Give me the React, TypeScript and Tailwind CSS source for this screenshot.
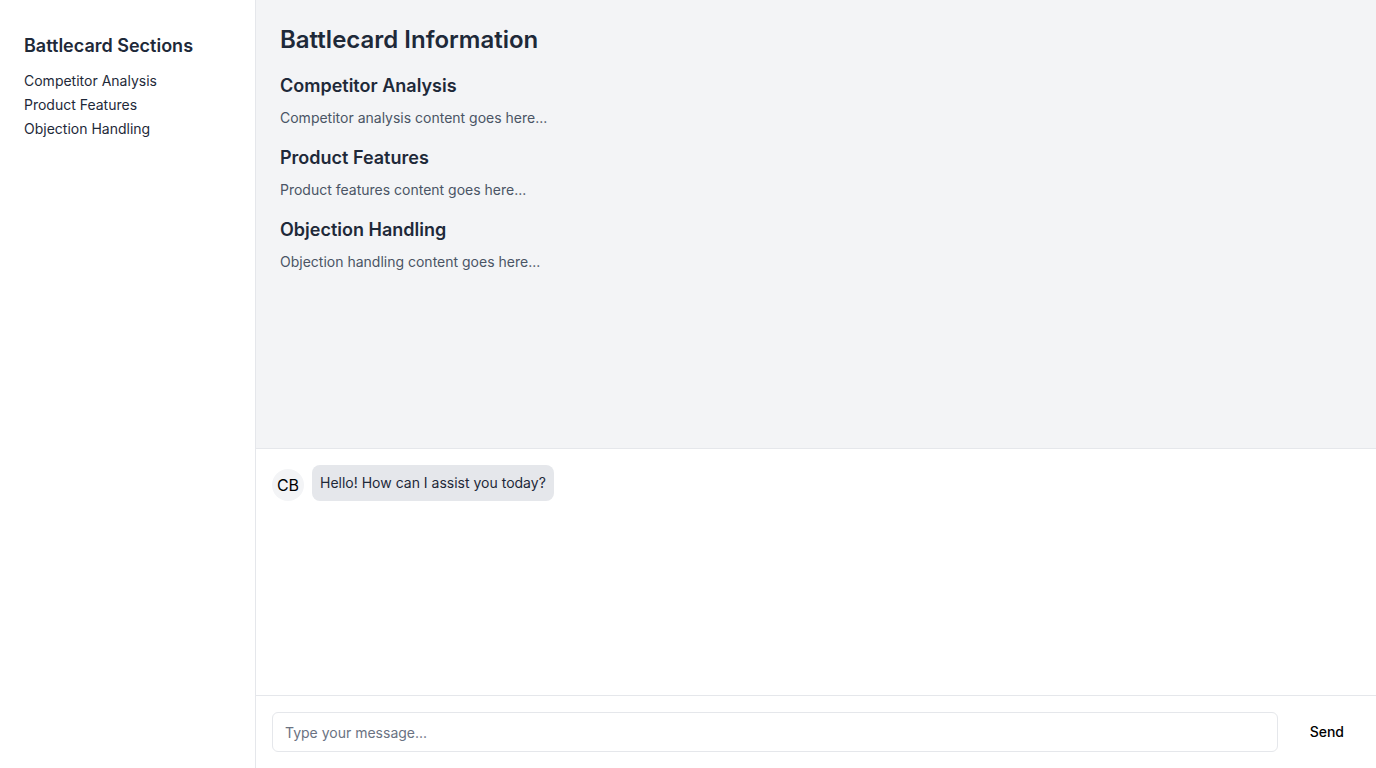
const sections = [
  {
    title: "Competitor Analysis",
    body: "Competitor analysis content goes here...",
  },
  {
    title: "Product Features",
    body: "Product features content goes here...",
  },
  {
    title: "Objection Handling",
    body: "Objection handling content goes here...",
  },
];

export default function App() {
  return (
    <div
      className="flex h-[768px] w-full bg-white text-gray-800"
      style={{ fontFamily: "Inter, 'Noto Sans', sans-serif" }}
    >
      {/* Sidebar */}
      <aside className="w-[256px] shrink-0 border-r border-gray-200 bg-white px-6 pt-8">
        <h2 className="mb-[11px] text-lg leading-7 font-semibold text-gray-800">
          Battlecard Sections
        </h2>
        <ul className="space-y-1">
          {sections.map((s) => (
            <li key={s.title} className="text-sm leading-5 text-gray-800">
              {s.title}
            </li>
          ))}
        </ul>
      </aside>

      {/* Main */}
      <div className="flex min-w-0 flex-1 flex-col">
        <section className="h-[449px] shrink-0 border-b border-gray-200 bg-gray-100 p-6">
          <h1 className="mb-4 text-2xl leading-8 font-semibold text-gray-800">
            Battlecard Information
          </h1>
          {sections.map((s) => (
            <div key={s.title} className="mb-4">
              <h3 className="mb-2 text-lg leading-7 font-semibold text-gray-800">
                {s.title}
              </h3>
              <p className="text-sm leading-5 text-gray-600">{s.body}</p>
            </div>
          ))}
        </section>

        {/* Chat */}
        <div className="flex-1 p-4">
          <div className="flex items-start gap-2">
            <div className="mt-1 flex h-8 w-8 shrink-0 items-center justify-center rounded-full bg-gray-100 text-base text-black">
              CB
            </div>
            <div className="rounded-lg bg-gray-200 px-2 py-2 text-sm leading-5 text-gray-800">
              Hello! How can I assist you today?
            </div>
          </div>
        </div>

        {/* Input bar */}
        <div className="flex items-center gap-4 border-t border-gray-200 p-4">
          <input
            type="text"
            placeholder="Type your message..."
            className="h-10 flex-1 rounded-md border border-gray-200 px-3 text-sm text-gray-800 placeholder:text-gray-500 outline-none"
          />
          <button className="px-4 py-2 text-sm font-medium text-black">Send</button>
        </div>
      </div>
    </div>
  );
}
